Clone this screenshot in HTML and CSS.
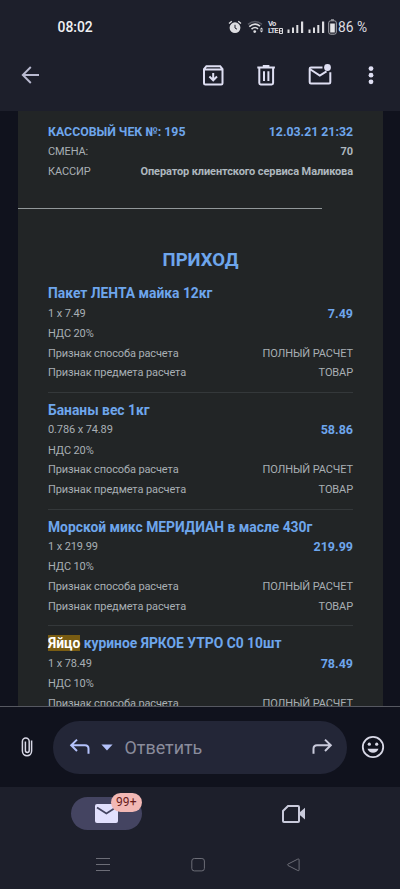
FILE: index.html
```html
<!DOCTYPE html>
<html lang="ru">
<head>
<meta charset="utf-8">
<meta name="viewport" content="width=device-width, initial-scale=1">
<title>Кассовый чек</title>
<link rel="stylesheet" href="styles.css">
</head>
<body>
<div class="screen">
  <header class="top">
    <div class="status">
      <span class="clock">08:02</span>
      <div class="indicators">
        <svg class="alarm" width="14" height="14" viewBox="0 0 14 14"><circle cx="7" cy="7.7" r="5.4" fill="#dddde1"/><path d="M1 3.6 3.8 1.2M13 3.6 10.2 1.2" stroke="#dddde1" stroke-width="1.3"/><path d="M7 4.8V8l2 1.2" stroke="#1d1f2b" fill="none"/></svg>
        <svg class="wifi" width="17" height="14" viewBox="0 0 17 14" fill="none"><path d="M1 4.3Q8 -1.2 15 4.3" stroke="#555762" stroke-width="1.5"/><path d="M2.3 6.6Q8 1.8 13 6.2M4.5 9.2Q8 6 11 8.8" stroke="#dddde1" stroke-width="1.6"/><circle cx="7.7" cy="11.6" r="1.4" fill="#dddde1"/><path d="m12.7 9.4 1.8-2 1.8 2zM12.7 10.6l1.8 2 1.8-2z" fill="#dddde1"/></svg>
        <div class="volte"><span>Vo</span><div class="lte"><span>LTE</span><svg width="4" height="6" viewBox="0 0 4 6"><path d="M.5.5h3v5h-3zM.5 3h3" fill="none" stroke="#dddde1"/></svg></div></div>
        <svg class="signal" width="17" height="12" viewBox="0 0 17 12"><path d="M.5 8.5h2V12h-2zM5 6.5h2V12H5zM9.3 4h2v8h-2zM14 .5h2.2V12H14z" fill="#dddde1"/></svg>
        <svg class="signal two" width="17" height="12" viewBox="0 0 17 12"><path d="M.5 8.5h2V12h-2zM5 6.5h2V12H5zM9.3 4h2v8h-2zM14 .5h2.2V12H14z" fill="#dddde1"/></svg>
        <svg class="battery" width="9" height="16" viewBox="0 0 9 16"><path d="M3 .3h3v1.2H3z" fill="#aaaab0"/><rect x=".7" y="1.8" width="7.6" height="13.4" rx="2" fill="none" stroke="#a4a5ac"/><path d="M2.2 4.5h4.6v9H2.2z" fill="#e4e4e7"/></svg>
        <span class="percent">86 %</span>
      </div>
    </div>
    <nav class="toolbar">
      <svg class="back" width="30" height="30" viewBox="0 0 30 30" fill="none" stroke="#b9bad0" stroke-width="1.9"><path d="M24 15H8.3M15.8 7l-8 8 8 8"/></svg>
      <svg class="archive" width="30" height="30" viewBox="0 0 30 30" fill="none" stroke="#dfdff3" stroke-width="2"><path d="M6 9.2 8.4 6.2H22.2l2.3 3v14q0 1.3-1.3 1.3H7.4q-1.4 0-1.4-1.3zM6.2 9.5h18.2M15.2 13v7M11.4 16.5l3.8 3.8 3.8-3.8"/></svg>
      <svg class="trash" width="30" height="30" viewBox="0 0 30 30" fill="none" stroke="#dfdff3" stroke-width="2"><path d="M6.3 7.4h17.6M11.8 6h6.6M8.3 8v15q0 1.4 1.4 1.4h11q1.4 0 1.4-1.4V8M13 11.3v9.6M17.4 11.3v9.6"/></svg>
      <svg class="mail" width="30" height="30" viewBox="0 0 30 30" fill="none" stroke="#dfdff3" stroke-width="2"><path d="M17.5 7.4H6q-1.3 0-1.3 1.3v13.5q0 1.3 1.3 1.3h18q1.3 0 1.3-1.3V12.2M5.5 9.5l9.3 6 6.7-4.1"/><circle cx="22.5" cy="7.5" r="3.4" fill="#dfdff3" stroke="none"/></svg>
      <svg class="more" width="10" height="30" viewBox="0 0 10 30" fill="#dfdff3"><circle cx="5" cy="8.6" r="2.4"/><circle cx="5" cy="15.2" r="2.4"/><circle cx="5" cy="21.8" r="2.4"/></svg>
    </nav>
  </header>

  <main class="viewport">
    <article class="receipt">
      <section class="summary">
        <div class="row lead"><span>КАССОВЫЙ ЧЕК №: 195</span><span>12.03.21 21:32</span></div>
        <div class="row"><span>СМЕНА:</span><b>70</b></div>
        <div class="row"><span>КАССИР</span><b>Оператор клиентского сервиса Маликова</b></div>
      </section>
      <hr class="divider">
      <h1 class="heading">ПРИХОД</h1>
      <section class="item">
        <h2 class="title">Пакет ЛЕНТА майка 12кг</h2>
        <div class="row cost"><span>1 x 7.49</span><b class="price">7.49</b></div>
        <div class="row"><span>НДС 20%</span></div>
        <div class="row"><span>Признак способа расчета</span><span>ПОЛНЫЙ РАСЧЕТ</span></div>
        <div class="row"><span>Признак предмета расчета</span><span>ТОВАР</span></div>
      </section>
      <section class="item">
        <h2 class="title">Бананы вес 1кг</h2>
        <div class="row cost"><span>0.786 x 74.89</span><b class="price">58.86</b></div>
        <div class="row"><span>НДС 20%</span></div>
        <div class="row"><span>Признак способа расчета</span><span>ПОЛНЫЙ РАСЧЕТ</span></div>
        <div class="row"><span>Признак предмета расчета</span><span>ТОВАР</span></div>
      </section>
      <section class="item">
        <h2 class="title">Морской микс МЕРИДИАН в масле 430г</h2>
        <div class="row cost"><span>1 x 219.99</span><b class="price">219.99</b></div>
        <div class="row"><span>НДС 10%</span></div>
        <div class="row"><span>Признак способа расчета</span><span>ПОЛНЫЙ РАСЧЕТ</span></div>
        <div class="row"><span>Признак предмета расчета</span><span>ТОВАР</span></div>
      </section>
      <section class="item">
        <h2 class="title"><mark>Яйцо</mark> куриное ЯРКОЕ УТРО С0 10шт</h2>
        <div class="row cost"><span>1 x 78.49</span><b class="price">78.49</b></div>
        <div class="row"><span>НДС 10%</span></div>
        <div class="row"><span>Признак способа расчета</span><span>ПОЛНЫЙ РАСЧЕТ</span></div>
      </section>
    </article>
  </main>

  <section class="reply">
    <svg class="clip" width="14" height="22" viewBox="0 0 14 22" fill="none" stroke="#d8d8e6" stroke-width="1.5"><path d="M11.6 4.5v10.6a4.6 4.6 0 0 1-9.2 0V5.4a3.4 3.4 0 0 1 6.8 0v9.2a1.9 1.9 0 0 1-3.8 0V5.5"/></svg>
    <div class="field">
      <svg width="22" height="18" viewBox="0 0 22 18" fill="none" stroke="#b4c2fb" stroke-width="2"><path d="M8 1.6 2.2 7.3 8 13M2.5 7.3H16q3.5 0 3.5 3.5v5"/></svg>
      <svg class="caret" width="12" height="7" viewBox="0 0 12 7"><path d="M.4.6h11.2L6 6.4z" fill="#b4c2fb"/></svg>
      <span class="placeholder">Ответить</span>
      <svg class="forward" width="22" height="18" viewBox="0 0 22 18" fill="none" stroke="#c9cadb" stroke-width="2"><path d="M14 1.6l5.8 5.7L14 13M19.5 7.3H6q-3.5 0-3.5 3.5v5"/></svg>
    </div>
    <svg class="smile" width="24" height="24" viewBox="0 0 24 24"><circle cx="12" cy="12" r="10.2" fill="none" stroke="#d8d8e6" stroke-width="1.8"/><circle cx="8.3" cy="9.2" r="1.6" fill="#d8d8e6"/><circle cx="15.7" cy="9.2" r="1.6" fill="#d8d8e6"/><path d="M6.5 13.7h11q-1.5 4-5.5 4t-5.5-4z" fill="#d8d8e6"/></svg>
  </section>

  <footer class="bottom">
    <nav class="tabs">
      <div class="pill">
        <svg width="23" height="19" viewBox="0 0 23 19"><rect width="23" height="19" rx="2" fill="#e2e0fd"/><path d="m2 3.5 9.4 6 9.4-6" fill="none" stroke="#444461" stroke-width="1.8"/></svg>
        <span class="badge">99+</span>
      </div>
      <svg class="meet" width="24" height="20" viewBox="0 0 24 20"><path d="M7 2h10q1 0 1 1v14q0 1-1 1H3q-1 0-1-1V7z" fill="none" stroke="#c9cadb" stroke-width="2"/><path d="M18.5 8.5 24 3.8v11.6l-5.5-4.7z" fill="#c9cadb"/></svg>
    </nav>
    <div class="system">
      <svg width="16" height="16" viewBox="0 0 16 16" stroke="#6c6d77"><path d="M1 1.5h14M1 7.5h14M1 13.5h14"/></svg>
      <svg width="16" height="16" viewBox="0 0 16 16" fill="none" stroke="#6c6d77"><rect x="1.8" y="1.5" width="12.6" height="12.4" rx="2.5"/></svg>
      <svg width="16" height="16" viewBox="0 0 16 16" fill="none" stroke="#6c6d77"><path d="M14.1 2.8v10q0 1.4-1.3.7L3 8.5q-1.1-.7 0-1.4l9.8-5q1.3-.7 1.3.7z"/></svg>
    </div>
  </footer>
</div>
</body>
</html>
```
FILE: styles.css
```css
* { box-sizing: border-box; }
body { margin: 0; background: #10121d; font-family: Roboto, "Noto Sans", sans-serif; }
svg { display: block; flex: none; }
.screen { width: 400px; height: 889px; overflow: hidden; display: flex; flex-direction: column; background: #10121d; }

.top { height: 111px; flex: none; background: #1d1f2b; }
.status { height: 54px; padding-left: 57.5px; display: flex; align-items: center; color: #f0f0f3; }
.clock { width: 170.5px; font-size: 13.9px; font-weight: 500; }
.indicators { display: flex; align-items: center; }
.wifi { margin-left: 5px; }
.volte { width: 14px; margin-left: 4px; display: flex; flex-direction: column; font-size: 7.6px; font-weight: 700; line-height: 6px; letter-spacing: -.8px; color: #dddde1; }
.volte span { display: block; height: 6px; }
.lte { display: flex; align-items: center; gap: 1px; margin-top: 1px; }
.signal { margin-left: 5px; }
.two { margin-left: 4px; }
.battery { margin-left: 3px; }
.percent { margin-left: 1px; font-size: 13.8px; letter-spacing: 0; color: #dddde1; white-space: nowrap; }
.toolbar { height: 42px; padding-left: 15px; display: flex; align-items: center; }
.archive { margin-left: 153px; }
.trash { margin-left: 23px; }
.mail { margin-left: 24px; }
.more { margin-left: 31px; }

.viewport { height: 595px; flex: none; overflow: hidden; }
.receipt { width: 365px; min-height: 595px; margin-left: 18px; background: #222526; color: #a8afb4; font-size: 11px; letter-spacing: -.11px; }
.summary { padding: 10px 30px 0; height: 97px; }
.row { height: 19.7px; display: flex; justify-content: space-between; align-items: center; white-space: nowrap; }
.row b { font-weight: 700; color: #aeb8bf; }
.lead { height: 21px; font-size: 12.3px; font-weight: 700; letter-spacing: 0; color: #6ea6ec; }
.divider { width: 304px; height: 1.4px; margin: 0; border: 0; background: #92989a; }
.heading { height: 67px; margin: 0; padding-top: 34px; text-align: center; font-size: 18.5px; line-height: 34px; font-weight: 700; letter-spacing: 0; color: #6ea6ec; }
.item { height: 116.7px; margin: 0 30px; padding-top: 7px; border-bottom: 1px solid #34383a; }
.title { height: 19.8px; margin: 0; font-size: 13.85px; line-height: 20px; font-weight: 700; letter-spacing: 0; color: #6ea6ec; white-space: nowrap; }
.title mark { display: inline-block; height: 16px; line-height: 16px; background: #795c12; color: #fff; }
.cost { height: 19.7px; margin-bottom: .8px; }
.row .price { font-size: 12.5px; letter-spacing: 0; color: #6ea6ec; }

.reply { height: 81px; flex: none; border-top: 1px solid #565861; display: flex; align-items: center; padding-left: 20px; }
.field { width: 294px; height: 53px; margin-left: 19px; padding: 0 14px 0 16px; border-radius: 27px; background: #232637; display: flex; align-items: center; }
.caret { margin-left: 10px; }
.placeholder { margin-left: 11.5px; font-size: 17.9px; color: #8a8c9c; }
.forward { margin-left: auto; }
.smile { margin-left: 14px; }

.bottom { flex: 1; background: #1d1f2b; }
.tabs { height: 54px; padding: 10px 0 0 71px; display: flex; }
.pill { position: relative; width: 71px; height: 33px; padding: 7px 0 0 24px; border-radius: 17px; background: #444461; }
.badge { position: absolute; left: 40px; top: -4px; width: 30.5px; height: 18.5px; border-radius: 10px; background: #f2b8b5; color: #671b1b; text-align: center; font-size: 12px; line-height: 19px; letter-spacing: .1px; }
.meet { margin: 7px 0 0 139px; }
.system { height: 48px; padding: 0 99px 0 95px; display: flex; align-items: center; justify-content: space-between; }
```
